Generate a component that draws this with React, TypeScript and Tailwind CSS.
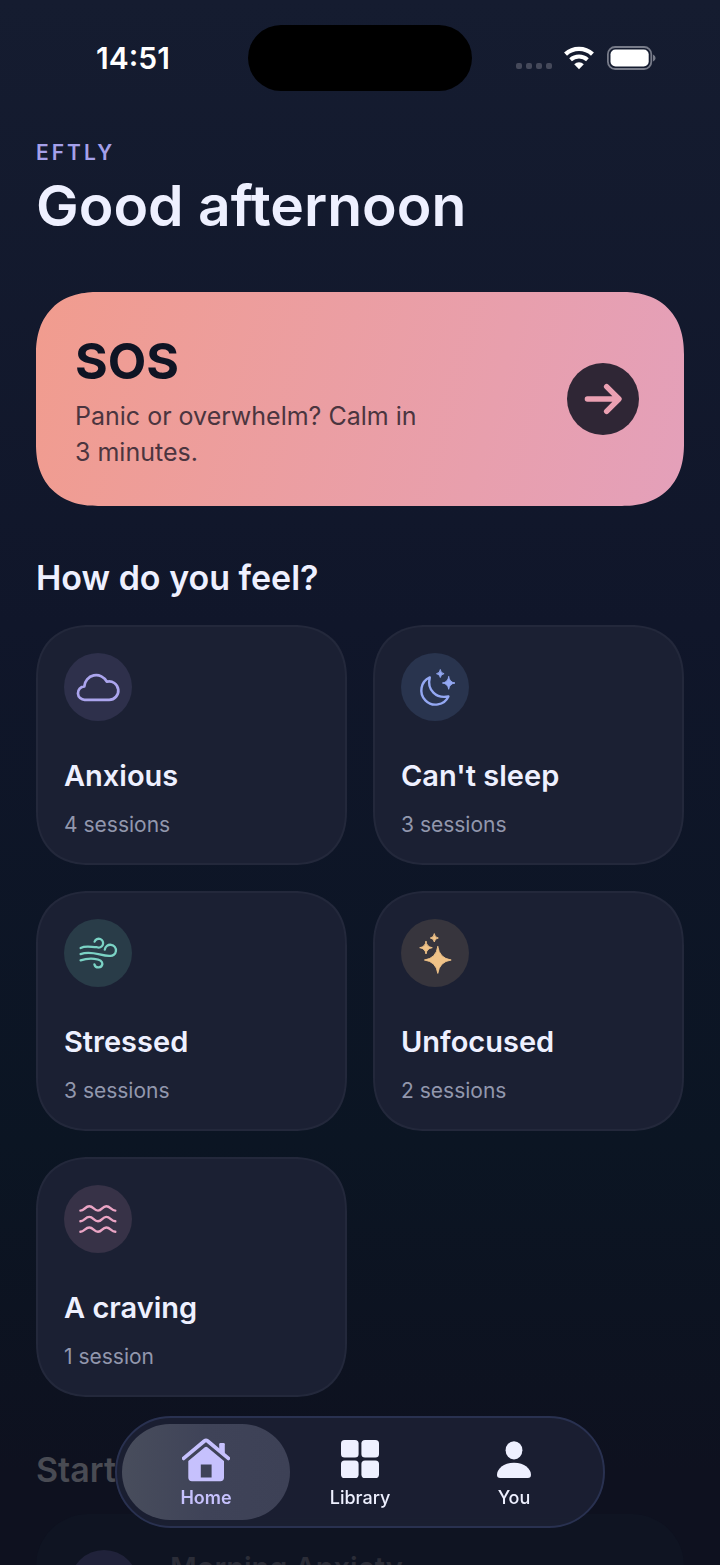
import { ReactNode, useState } from "react";
import clsx from "clsx";

type Mood = {
  title: string;
  sessions: string;
  tint: string;
  icon: ReactNode;
};

type Tab = {
  name: string;
  icon: ReactNode;
};

function Sparkle(props: { x: number; y: number; r: number }) {
  const { x, y, r } = props;
  const k = r * 0.12;
  return (
    <path
      d={`M${x} ${y - r}Q${x + k} ${y - k} ${x + r} ${y}Q${x + k} ${y + k} ${x} ${y + r}Q${x - k} ${y + k} ${x - r} ${y}Q${x - k} ${y - k} ${x} ${y - r}Z`}
      fill="currentColor"
      stroke="currentColor"
      strokeWidth="0.9"
    />
  );
}

function MoodIcon(props: { children: ReactNode }) {
  return (
    <svg
      viewBox="0 0 68 68"
      className="size-full"
      fill="none"
      stroke="currentColor"
      strokeWidth="2.7"
      strokeLinecap="round"
      strokeLinejoin="round"
      aria-hidden="true"
    >
      {props.children}
    </svg>
  );
}

const moods: Mood[] = [
  {
    title: "Anxious",
    sessions: "4 sessions",
    tint: "bg-[#2e304b] text-[#aca5ee]",
    icon: (
      <path d="M21 46.8A6.7 6.7 0 0 1 20.3 33.4A11.9 11.9 0 0 1 42.8 28.7A9.2 9.2 0 1 1 45 46.8Z" />
    ),
  },
  {
    title: "Can't sleep",
    sessions: "3 sessions",
    tint: "bg-[#29344e] text-[#94a8f3]",
    icon: (
      <>
        <path
          strokeWidth="2.4"
          d="M28.8 24.4A14.2 14.2 0 1 0 47.4 43.4C35.4 46 25.6 37 28.8 24.4Z"
        />
        <Sparkle x={39.3} y={20.7} r={3.8} />
        <Sparkle x={47.7} y={30} r={6.3} />
      </>
    ),
  },
  {
    title: "Stressed",
    sessions: "3 sessions",
    tint: "bg-[#293c48] text-[#7bd3c5]",
    icon: (
      <g strokeWidth="2.3">
        <path d="M16.6 29C22 26.3 27.5 28.3 33 28.2A4.4 4.4 0 1 0 30.6 22.6" />
        <path d="M16.6 35.1C28 31 37 37.3 45.7 36.9A5.6 5.6 0 1 0 40.8 30.6" />
        <path d="M16.6 41.4C24 38.8 38.4 38.6 38.4 45A4.1 4.1 0 0 1 30.4 45.4" />
      </g>
    ),
  },
  {
    title: "Unfocused",
    sessions: "2 sessions",
    tint: "bg-[#37353d] text-[#f0c388]",
    icon: (
      <>
        <Sparkle x={33.3} y={19} r={4} />
        <Sparkle x={25} y={28.7} r={6.3} />
        <Sparkle x={36.8} y={41} r={13.4} />
      </>
    ),
  },
  {
    title: "A craving",
    sessions: "1 session",
    tint: "bg-[#373247] text-[#eba5c5]",
    icon: (
      <g strokeWidth="2.4">
        <path d="M16.4 25.6C20.3 25.6 21.3 21.3 25.3 21.3S30 25.6 34 25.6S38.3 21.3 42.3 21.3S47.3 25.6 51.3 25.6" />
        <path d="M16.4 36.2C20.3 36.2 21.3 31.9 25.3 31.9S30 36.2 34 36.2S38.3 31.9 42.3 31.9S47.3 36.2 51.3 36.2" />
        <path d="M16.4 46.8C20.3 46.8 21.3 42.5 25.3 42.5S30 46.8 34 46.8S38.3 42.5 42.3 42.5S47.3 46.8 51.3 46.8" />
      </g>
    ),
  },
];

const tabs: Tab[] = [
  {
    name: "Home",
    icon: (
      <svg viewBox="0 0 48 44" className="h-11 w-12" aria-hidden="true">
        <path d="M38.4 5H41.6Q42.8 5 42.8 6.2V16.5L37.2 12V6.2Q37.2 5 38.4 5Z" fill="currentColor" />
        <path
          d="M1.6 20.4L22.4 3Q24 1.8 25.6 3L46.4 20.4"
          fill="none"
          stroke="currentColor"
          strokeWidth="3.8"
          strokeLinecap="round"
        />
        <path
          fillRule="evenodd"
          d="M22.8 9.2Q24.1 8.2 25.4 9.2L42 23V39.6Q42 43.3 38.3 43.3H10Q6.3 43.3 6.3 39.6V23ZM18.8 26.4V39.6H29.6V26.4Z"
          fill="currentColor"
        />
      </svg>
    ),
  },
  {
    name: "Library",
    icon: (
      <svg viewBox="0 0 38 44" className="h-11 w-[38px]" fill="currentColor" aria-hidden="true">
        <rect x="0" y="2" width="17.6" height="17.6" rx="3.6" />
        <rect x="20.4" y="2" width="17.6" height="17.6" rx="3.6" />
        <rect x="0" y="22.4" width="17.6" height="17.6" rx="3.6" />
        <rect x="20.4" y="22.4" width="17.6" height="17.6" rx="3.6" />
      </svg>
    ),
  },
  {
    name: "You",
    icon: (
      <svg viewBox="0 0 34 44" className="h-11 w-[34px]" fill="currentColor" aria-hidden="true">
        <ellipse cx="17" cy="12.3" rx="8.4" ry="9.1" />
        <path d="M3.2 40Q0 40 0 36.8C0 31.1 6.5 24.8 17 24.8S34 31.1 34 36.8Q34 40 30.8 40Z" />
      </svg>
    ),
  },
];

function StatusBar() {
  return (
    <div className="grid grid-cols-[1fr_224px_1fr] items-center pt-[25px] text-white">
      <span className="pl-[18px] text-center text-[30px] leading-9 font-semibold">
        14:51
      </span>
      <div className="h-[66px] rounded-full bg-black" />
      <div className="flex items-center justify-center gap-3 pr-5">
        <div className="flex gap-1 pt-4">
          <i className="size-1.5 rounded-xs bg-[#45495a]" />
          <i className="size-1.5 rounded-xs bg-[#45495a]" />
          <i className="size-1.5 rounded-xs bg-[#45495a]" />
          <i className="size-1.5 rounded-xs bg-[#45495a]" />
        </div>
        <svg viewBox="0 0 30 24" className="h-6 w-[30px]" fill="none" stroke="white" aria-hidden="true">
          <path strokeWidth="4.4" d="M1.55 8.06A20.1 20.1 0 0 1 28.45 8.06" />
          <path strokeWidth="4" d="M6.57 13.64A12.6 12.6 0 0 1 23.43 13.64" />
          <path stroke="none" fill="white" d="M15 23.2L10.2 18.2A7 7 0 0 1 19.8 18.2Z" />
        </svg>
        <svg viewBox="0 0 50 24" className="h-6 w-[50px]" aria-hidden="true">
          <rect x="1.9" y="1" width="43.4" height="22" rx="7.2" fill="none" stroke="#777b89" strokeWidth="1.8" />
          <rect x="4.5" y="3.6" width="38.2" height="16.8" rx="5" fill="white" />
          <path d="M47 8.4Q49.6 9.4 49.6 12T47 15.6Z" fill="#777b89" />
        </svg>
      </div>
    </div>
  );
}

function MoodCard(props: { mood: Mood }) {
  const { title, sessions, tint, icon } = props.mood;
  return (
    <button
      type="button"
      className="flex flex-col items-start rounded-[54px] border-2 border-[#23283b] bg-[#1b2033] px-[26px] pt-[26px] pb-6 text-left [corner-shape:superellipse(1.2)]"
    >
      <span className={`size-[68px] rounded-full ${tint}`}>
        <MoodIcon>{icon}</MoodIcon>
      </span>
      <span className="mt-[35px] text-[29px] leading-10 font-semibold text-[#eef0ff]">
        {title}
      </span>
      <span className="mt-[15px] text-[21px] leading-7 text-[#9297ad]">
        {sessions}
      </span>
    </button>
  );
}

function TabBar() {
  const [active, setActive] = useState("Home");
  return (
    <nav className="fixed bottom-[37px] left-1/2 flex -translate-x-1/2 rounded-full border-2 border-[#293150] bg-[#1b2033]/95 px-[5px] py-1.5 backdrop-blur-md">
      {tabs.map((tab: Tab) => (
        <button
          type="button"
          key={tab.name}
          onClick={() => setActive(tab.name)}
          className={clsx(
            "flex h-[96px] w-[168px] flex-col items-center rounded-full pt-3.5 not-first:-ml-[14px]",
            tab.name === active
              ? "bg-linear-to-r from-[#484d5c] via-[#3f4358] to-[#3d4156] text-[#c6c1fd]"
              : "text-[#eef0ff]",
          )}
        >
          {tab.icon}
          <span
            className={clsx(
              "mt-1 text-[18px] leading-6",
              tab.name === active ? "font-semibold" : "font-medium",
            )}
          >
            {tab.name}
          </span>
        </button>
      ))}
    </nav>
  );
}

function App() {
  return (
    <div className="h-screen overflow-hidden bg-[linear-gradient(180deg,#151c30_0%,#10162a_40%,#0b1523_73%,#0e111f_94%)] font-[Inter,'Liberation_Sans',sans-serif]">
      <StatusBar />
      <main className="px-9 pt-12">
        <p className="text-[21px] leading-7 font-semibold tracking-[3px] text-[#a5a0ea]">
          EFTLY
        </p>
        <h1 className="mt-[3px] text-[57px] leading-[72px] font-semibold text-[#eef0ff]">
          Good afternoon
        </h1>

        <button
          type="button"
          className="mt-[50px] flex w-full items-center justify-between rounded-[62px] bg-linear-105 from-[#f19c8e] to-[#e4a0ba] py-9 pr-[45px] pl-[39px] text-left [corner-shape:superellipse(1.2)]"
        >
          <span className="flex flex-col">
            <span className="text-[50px] leading-[66px] font-bold text-[#0f1424]">SOS</span>
            <span className="mt-1 max-w-[360px] text-[25px] leading-9 text-[#4b353f]">
              Panic or overwhelm? Calm in 3 minutes.
            </span>
          </span>
          <span className="size-[72px] shrink-0 rounded-full bg-[#2f2635] text-[#eba0b2]">
            <svg
              viewBox="0 0 72 72"
              fill="none"
              stroke="currentColor"
              strokeWidth="5.4"
              strokeLinecap="round"
              strokeLinejoin="round"
              aria-hidden="true"
            >
              <path d="M20.4 36H51.5M39.6 23.6L52 36L39.6 48.4" />
            </svg>
          </span>
        </button>

        <h2 className="mt-[50px] text-[34px] leading-11 font-semibold text-[#eef0ff]">
          How do you feel?
        </h2>
        <div className="mt-[25px] grid grid-cols-2 gap-[26px]">
          {moods.map((mood: Mood) => (
            <MoodCard mood={mood} key={mood.title} />
          ))}
        </div>

        <h2 className="mt-[51px] text-[34px] leading-11 font-semibold text-[#494b53]">
          Start here
        </h2>
        <div className="mt-[22px] flex gap-8 rounded-[52px] bg-[#0f1422] px-[34px] pt-9 pb-9">
          <div className="size-[68px] rounded-full bg-[#20223a]" />
          <span className="text-[29px] leading-9 font-semibold text-[#2b2d38]">
            Morning Anxiety
          </span>
        </div>
      </main>
      <TabBar />
    </div>
  );
}

export default App;
